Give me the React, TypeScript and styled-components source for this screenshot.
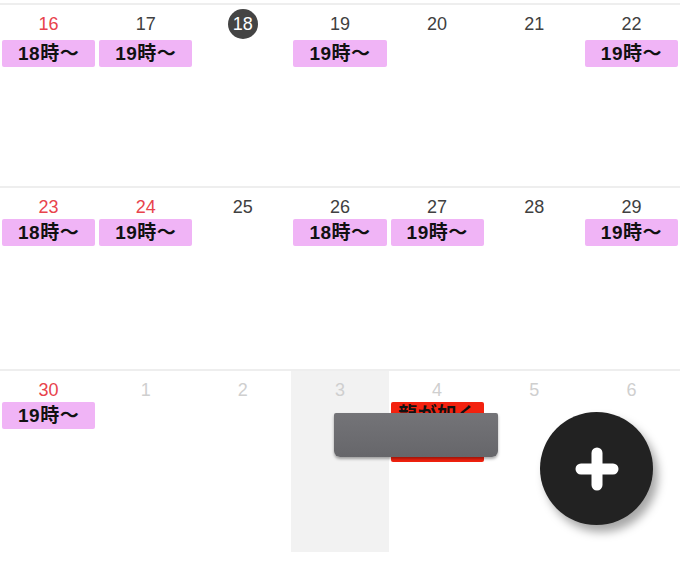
import React from "react";
import styled, { createGlobalStyle } from "styled-components";

const GlobalStyle = createGlobalStyle`
  html, body {
    margin: 0;
    padding: 0;
    background: #ffffff;
  }
  body {
    font-family: "Liberation Sans", "Noto Sans CJK JP", sans-serif;
    overflow: hidden;
  }
`;

const Page = styled.div`
  width: 680px;
  height: 565px;
  position: relative;
  overflow: hidden;
  padding-top: 3px;
  box-sizing: border-box;
`;

const Week = styled.div`
  display: grid;
  grid-template-columns: repeat(7, 1fr);
  height: 183px;
  box-sizing: border-box;
  border-top: 2px solid #eeeeee;
  &:last-of-type {
    height: 184px;
    border-bottom: 2px solid #eeeeee;
  }
`;

const Day = styled.div<{ $shaded?: boolean; $chipGap: number }>`
  display: flex;
  flex-direction: column;
  align-items: stretch;
  background: ${(p) => (p.$shaded ? "#f2f2f2" : "transparent")};
  padding: 5px 2px 0;
  position: relative;
  .chips {
    margin-top: ${(p) => p.$chipGap}px;
    display: flex;
    flex-direction: column;
    gap: 3px;
  }
`;

const DateNum = styled.div<{ $tone: "red" | "dark" | "faint"; $today?: boolean }>`
  align-self: center;
  height: 28px;
  min-width: 28px;
  display: flex;
  align-items: center;
  justify-content: center;
  font-size: 18px;
  border-radius: 50%;
  color: ${(p) =>
    p.$today
      ? "#ffffff"
      : p.$tone === "red"
      ? "#e8434c"
      : p.$tone === "faint"
      ? "#cfcfcf"
      : "#404040"};
  background: ${(p) => (p.$today ? "#444444" : "transparent")};
  ${(p) => (p.$today ? "width: 30px; height: 30px; margin-top: -1px;" : "")}
`;

const Chip = styled.div<{ $kind: "time" | "game" }>`
  height: ${(p) => (p.$kind === "game" ? "60px" : "27px")};
  background: ${(p) => (p.$kind === "game" ? "#f3220f" : "#f0b4f6")};
  border-radius: 2px;
  color: #111111;
  font-weight: bold;
  font-size: 19px;
  line-height: ${(p) => (p.$kind === "game" ? "25px" : "27px")};
  text-align: center;
  white-space: nowrap;
  overflow: hidden;
  letter-spacing: 0.5px;
`;

const Toast = styled.div`
  position: absolute;
  left: 334px;
  top: 413px;
  width: 164px;
  height: 44px;
  background: linear-gradient(#747478, #66666a);
  border-radius: 2px 2px 6px 6px;
  box-shadow: 0 2px 3px rgba(0, 0, 0, 0.35);
`;

const Fab = styled.button`
  position: absolute;
  left: 540px;
  top: 412px;
  width: 113px;
  height: 113px;
  border: none;
  border-radius: 50%;
  background: #222222;
  box-shadow: 5px 7px 10px rgba(0, 0, 0, 0.35);
  display: flex;
  align-items: center;
  justify-content: center;
  padding: 0;
  cursor: pointer;
`;

type Cell = {
  d: number;
  tone: "red" | "dark" | "faint";
  today?: boolean;
  shaded?: boolean;
  chip?: string;
  game?: string;
};

const weeks: Cell[][] = [
  [
    { d: 16, tone: "red", chip: "18時〜" },
    { d: 17, tone: "dark", chip: "19時〜" },
    { d: 18, tone: "dark", today: true },
    { d: 19, tone: "dark", chip: "19時〜" },
    { d: 20, tone: "dark" },
    { d: 21, tone: "dark" },
    { d: 22, tone: "dark", chip: "19時〜" },
  ],
  [
    { d: 23, tone: "red", chip: "18時〜" },
    { d: 24, tone: "red", chip: "19時〜" },
    { d: 25, tone: "dark" },
    { d: 26, tone: "dark", chip: "18時〜" },
    { d: 27, tone: "dark", chip: "19時〜" },
    { d: 28, tone: "dark" },
    { d: 29, tone: "dark", chip: "19時〜" },
  ],
  [
    { d: 30, tone: "red", chip: "19時〜" },
    { d: 1, tone: "faint" },
    { d: 2, tone: "faint" },
    { d: 3, tone: "faint", shaded: true },
    { d: 4, tone: "faint", game: "龍が如く" },
    { d: 5, tone: "faint" },
    { d: 6, tone: "faint" },
  ],
];

export default function App() {
  return (
    <Page>
      <GlobalStyle />
      {weeks.map((week, wi) => (
        <Week key={wi}>
          {week.map((c) => (
            <Day key={c.d} $shaded={c.shaded} $chipGap={wi === 0 ? 2 : -2}>
              <DateNum $tone={c.tone} $today={c.today}>
                {c.d}
              </DateNum>
              <div className="chips">
                {c.chip && <Chip $kind="time">{c.chip}</Chip>}
                {c.game && <Chip $kind="game">{c.game}</Chip>}
              </div>
            </Day>
          ))}
        </Week>
      ))}
      <Toast />
      <Fab aria-label="追加">
        <svg width="44" height="44" viewBox="0 0 44 44">
          <path
            d="M22 6 V38 M6 22 H38"
            stroke="#ffffff"
            strokeWidth="11"
            strokeLinecap="round"
          />
        </svg>
      </Fab>
    </Page>
  );
}
